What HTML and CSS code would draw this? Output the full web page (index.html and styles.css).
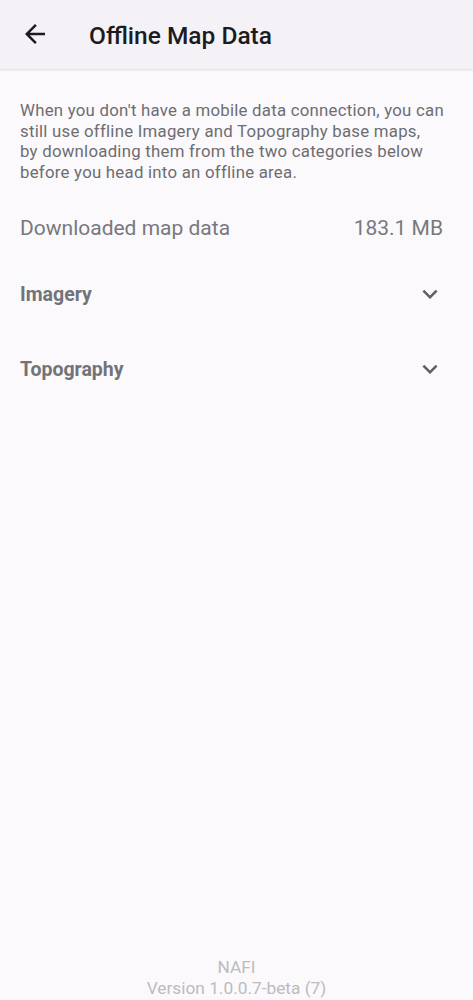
FILE: index.html
```html
<!DOCTYPE html>
<html lang="en">
<head>
<meta charset="utf-8">
<title>Offline Map Data</title>
<link rel="stylesheet" href="styles.css">
</head>
<body>
<div class="screen">
  <header class="appbar">
    <button class="back" aria-label="Back">
      <svg width="30" height="30" viewBox="0 0 24 24"><path d="M20 11H7.83l5.59-5.59L12 4l-8 8 8 8 1.41-1.41L7.83 13H20v-2z" fill="#1d1b20"/></svg>
    </button>
    <h1 class="title">Offline Map Data</h1>
  </header>
  <main class="content">
    <p class="intro">When you don't have a mobile data connection, you can<br>still use offline Imagery and Topography base maps,<br>by downloading them from the two categories below<br>before you head into an offline area.</p>
    <div class="usage">
      <span>Downloaded map data</span>
      <span>183.1 MB</span>
    </div>
    <div class="section">
      <span class="section-name">Imagery</span>
      <svg class="chev" width="30" height="30" viewBox="0 0 24 24"><path d="M7.41 8.59 12 13.17l4.59-4.58L18 10l-6 6-6-6z" fill="#5f5f63"/></svg>
    </div>
    <div class="section">
      <span class="section-name">Topography</span>
      <svg class="chev" width="30" height="30" viewBox="0 0 24 24"><path d="M7.41 8.59 12 13.17l4.59-4.58L18 10l-6 6-6-6z" fill="#5f5f63"/></svg>
    </div>
  </main>
  <footer class="footer">
    <div>NAFI</div>
    <div>Version 1.0.0.7-beta (7)</div>
  </footer>
</div>
</body>
</html>
```

FILE: styles.css
```css
html, body {
  margin: 0;
  padding: 0;
}

body {
  background: #fbf9fc;
  font-family: Roboto, "Noto Sans", sans-serif;
}

.screen {
  height: 1000px;
  display: flex;
  flex-direction: column;
}

.appbar {
  height: 69px;
  flex: none;
  display: flex;
  align-items: center;
  background: #f4f2f6;
  box-shadow: 0 1px 2px rgba(0, 0, 0, 0.12);
  position: relative;
  z-index: 1;
}

.back {
  width: 30px;
  height: 30px;
  margin: -1px 0 0 20px;
  border: 0;
  padding: 0;
  background: none;
  display: flex;
  align-items: center;
  justify-content: center;
}

.title {
  margin: 2px 0 0 39px;
  font-size: 24.5px;
  font-weight: 500;
  color: #1d1b20;
  letter-spacing: 0;
}

.content {
  flex: 1;
  padding: 31px 30px 0 20px;
}

.intro {
  margin: 0 -10px 0 0;
  font-size: 16.8px;
  line-height: 20.7px;
  letter-spacing: 0.25px;
  color: #6d6d71;
  white-space: nowrap;
}

.usage {
  display: flex;
  justify-content: space-between;
  margin-top: 32px;
  font-size: 21px;
  color: #78787c;
  line-height: 26px;
}

.section {
  display: flex;
  justify-content: space-between;
  align-items: center;
  height: 30px;
  margin-top: 39px;
}

.section + .section {
  margin-top: 45px;
}

.section-name {
  font-size: 19.5px;
  font-weight: 700;
  color: #737377;
}

.chev {
  margin-right: -1.5px;
  margin-top: -1px;
}

.footer {
  flex: none;
  text-align: center;
  color: #bcbcbe;
  font-size: 17.3px;
  line-height: 21px;
  height: 43px;
}
```
